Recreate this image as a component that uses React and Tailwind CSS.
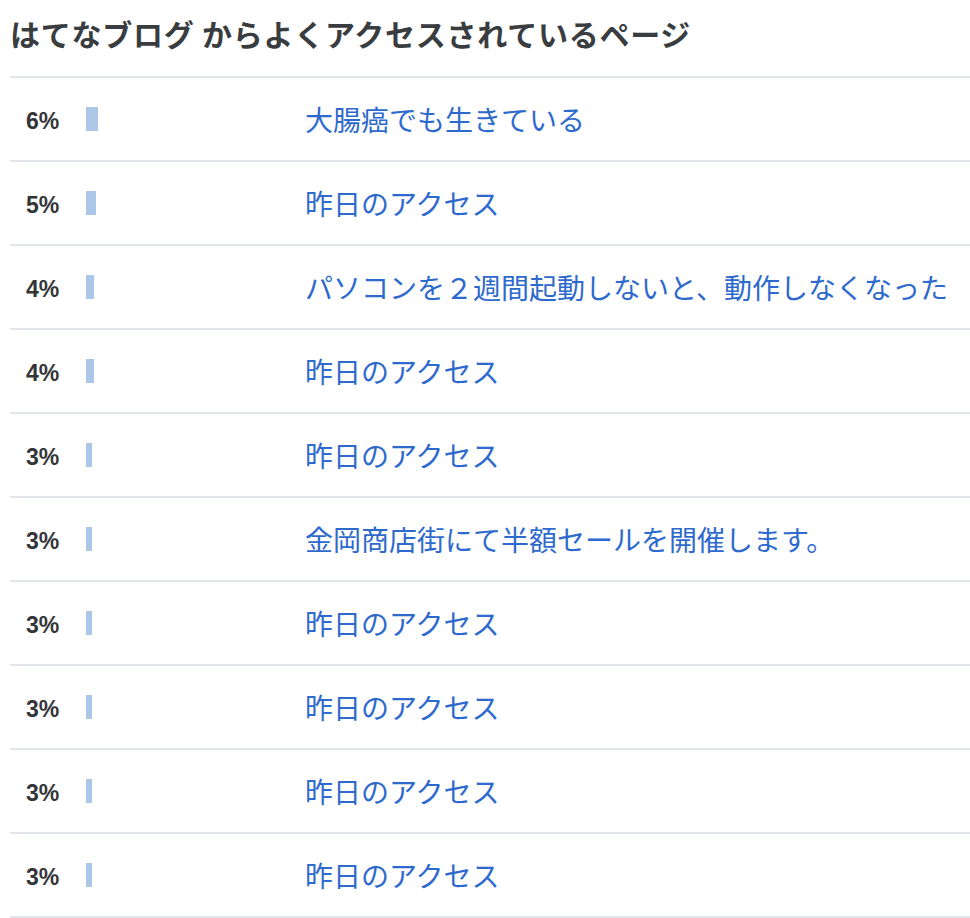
import React from "react";

const rows = [
  [6, "大腸癌でも生きている"],
  [5, "昨日のアクセス"],
  [4, "パソコンを２週間起動しないと、動作しなくなった"],
  [4, "昨日のアクセス"],
  [3, "昨日のアクセス"],
  [3, "金岡商店街にて半額セールを開催します。"],
  [3, "昨日のアクセス"],
  [3, "昨日のアクセス"],
  [3, "昨日のアクセス"],
  [3, "昨日のアクセス"],
];

export default function App() {
  return (
    <div className="bg-white w-[970px] h-[918px] pl-[10px] overflow-hidden" style={{ fontFamily: '"Noto Sans CJK JP", "Noto Sans", sans-serif' }}>
      <div className="h-[76px] flex items-start pt-[13px]">
        <h1 className="text-[30px] leading-[40px] font-bold text-[#3a3d40] tracking-[0.75px]">はてなブログ からよくアクセスされているページ</h1>
      </div>
      <ul className="border-b-2 border-[#e1e5ea]">
        {rows.map(([p, t], i) => (
          <li key={i} className="h-[84px] border-t-2 border-[#e1e5ea] flex items-center">
            <span className="w-[76px] shrink-0 pl-[16px] text-[23px] font-bold text-[#333538] pt-[4px]" style={{ fontFamily: '"Liberation Sans", Arial, sans-serif' }}>{p}%</span>
            <span className="w-[219px] shrink-0 flex items-center h-[24px]">
              <span className="h-[24px] bg-[#abc6e6] block" style={{ width: p * 2 }} />
            </span>
            <a className="text-[28px] text-[#2e6acd] leading-[40px]" href="#">{t}</a>
          </li>
        ))}
      </ul>
    </div>
  );
}
